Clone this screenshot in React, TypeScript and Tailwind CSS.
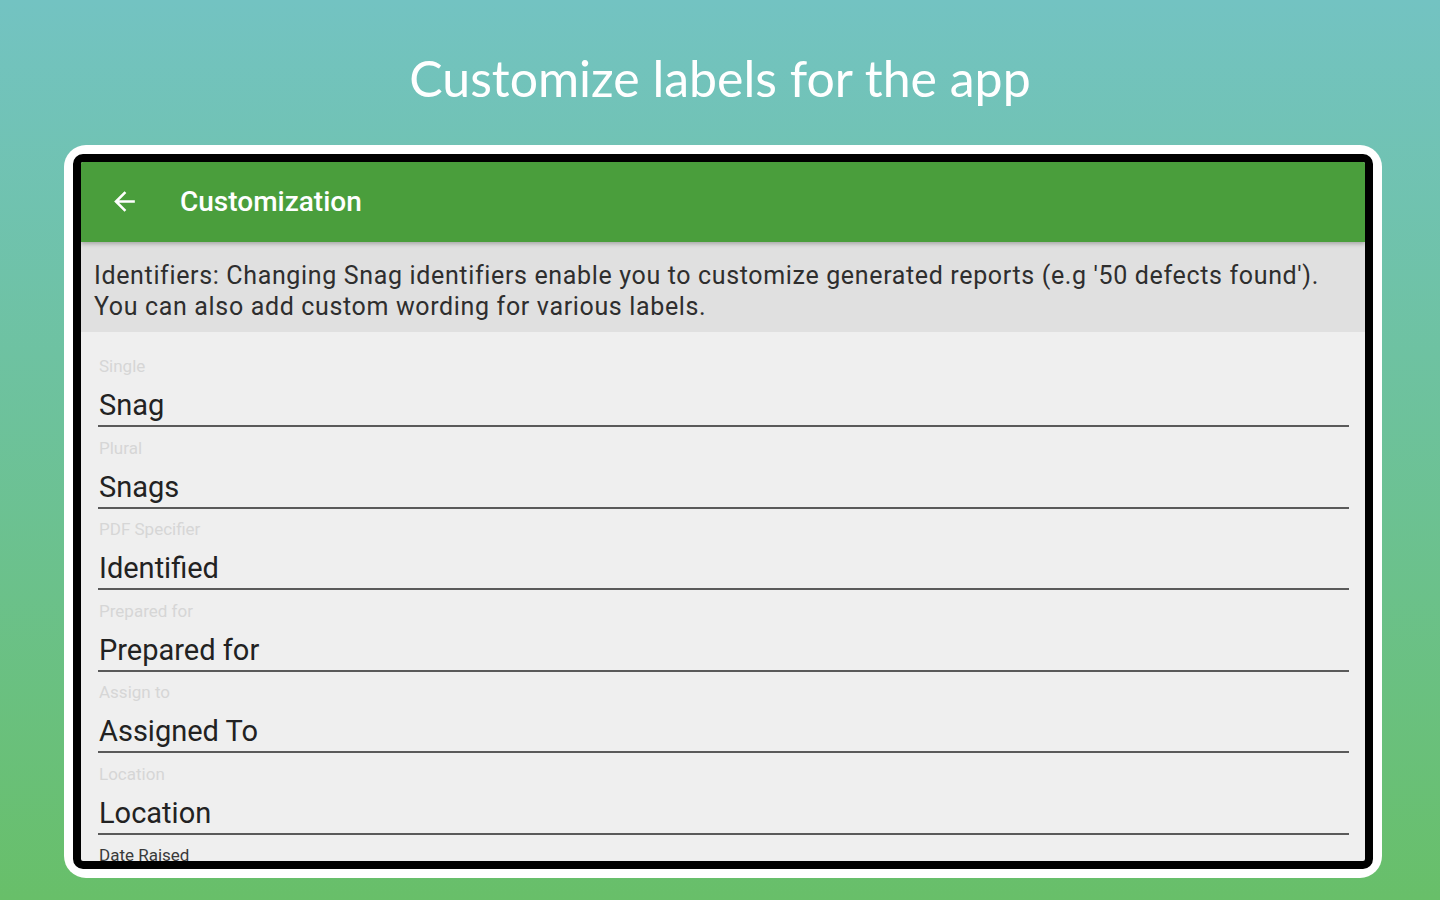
import React from "react";

const fields: { label: string; value?: string; dark?: boolean }[] = [
  { label: "Single", value: "Snag" },
  { label: "Plural", value: "Snags" },
  { label: "PDF Specifier", value: "Identified" },
  { label: "Prepared for", value: "Prepared for" },
  { label: "Assign to", value: "Assigned To" },
  { label: "Location", value: "Location" },
  { label: "Date Raised", value: "Date Raised", dark: true },
];

export default function App() {
  return (
    <div className="w-[1440px] h-[900px] overflow-hidden bg-gradient-to-b from-[#73c3c2] to-[#68bf69] flex flex-col items-center">
      <div className="h-[145px] w-full flex items-center justify-center pt-[11px]">
        <h1
          className="text-white text-[50px] leading-none"
          style={{ fontFamily: "Lato, 'Open Sans', sans-serif" }}
        >
          Customize labels for the app
        </h1>
      </div>
      <div className="w-[1318px] h-[733px] ml-[6px] bg-white rounded-[22px] p-[9px]">
        <div
          className="w-full h-full border-[8px] border-black rounded-[10px] overflow-hidden bg-[#efefef] flex flex-col"
          style={{ fontFamily: "Roboto, 'Liberation Sans', sans-serif" }}
        >
          <div className="h-[80px] shrink-0 bg-[#4a9e3c] flex items-center relative z-10 shadow-[0_2px_4px_rgba(0,0,0,0.25)]">
            <svg
              width="31"
              height="31"
              viewBox="0 0 24 24"
              className="ml-[28px] mt-[-2px]"
              fill="#ffffff"
            >
              <path d="M20 11H7.83l5.59-5.59L12 4l-8 8 8 8 1.41-1.41L7.83 13H20v-2z" />
            </svg>
            <span className="ml-[40px] text-white text-[28px] font-medium">
              Customization
            </span>
          </div>
          <div className="h-[90px] shrink-0 bg-[#e0e0e0] pl-[13px] pt-[18px] text-[25px] tracking-[0.65px] leading-[31px] text-[#2e2e2e]">
            <div className="whitespace-nowrap">
              Identifiers: Changing Snag identifiers enable you to customize generated reports (e.g '50 defects found').
            </div>
            <div className="whitespace-nowrap">You can also add custom wording for various labels.</div>
          </div>
          <div className="flex-1 pl-[17px] pr-[16px] pt-[13.5px]">
            {fields.map((f) => (
              <div key={f.label} className="pt-[9.5px]">
                <div
                  className={`h-[20px] leading-[20px] text-[17px] pl-[1px] mt-[1px] mb-[-1px] ${
                    f.dark ? "text-[#3a3a3a]" : "text-[#d6d6d6]"
                  }`}
                >
                  {f.label}
                </div>
                <div className="mt-[15px] h-[30px] leading-[30px] text-[29px] text-[#222222] pl-[1px]">
                  {f.value}
                </div>
                <div className="mt-[5px] h-[2px] bg-[#5a5a5a]" />
              </div>
            ))}
          </div>
        </div>
      </div>
    </div>
  );
}
